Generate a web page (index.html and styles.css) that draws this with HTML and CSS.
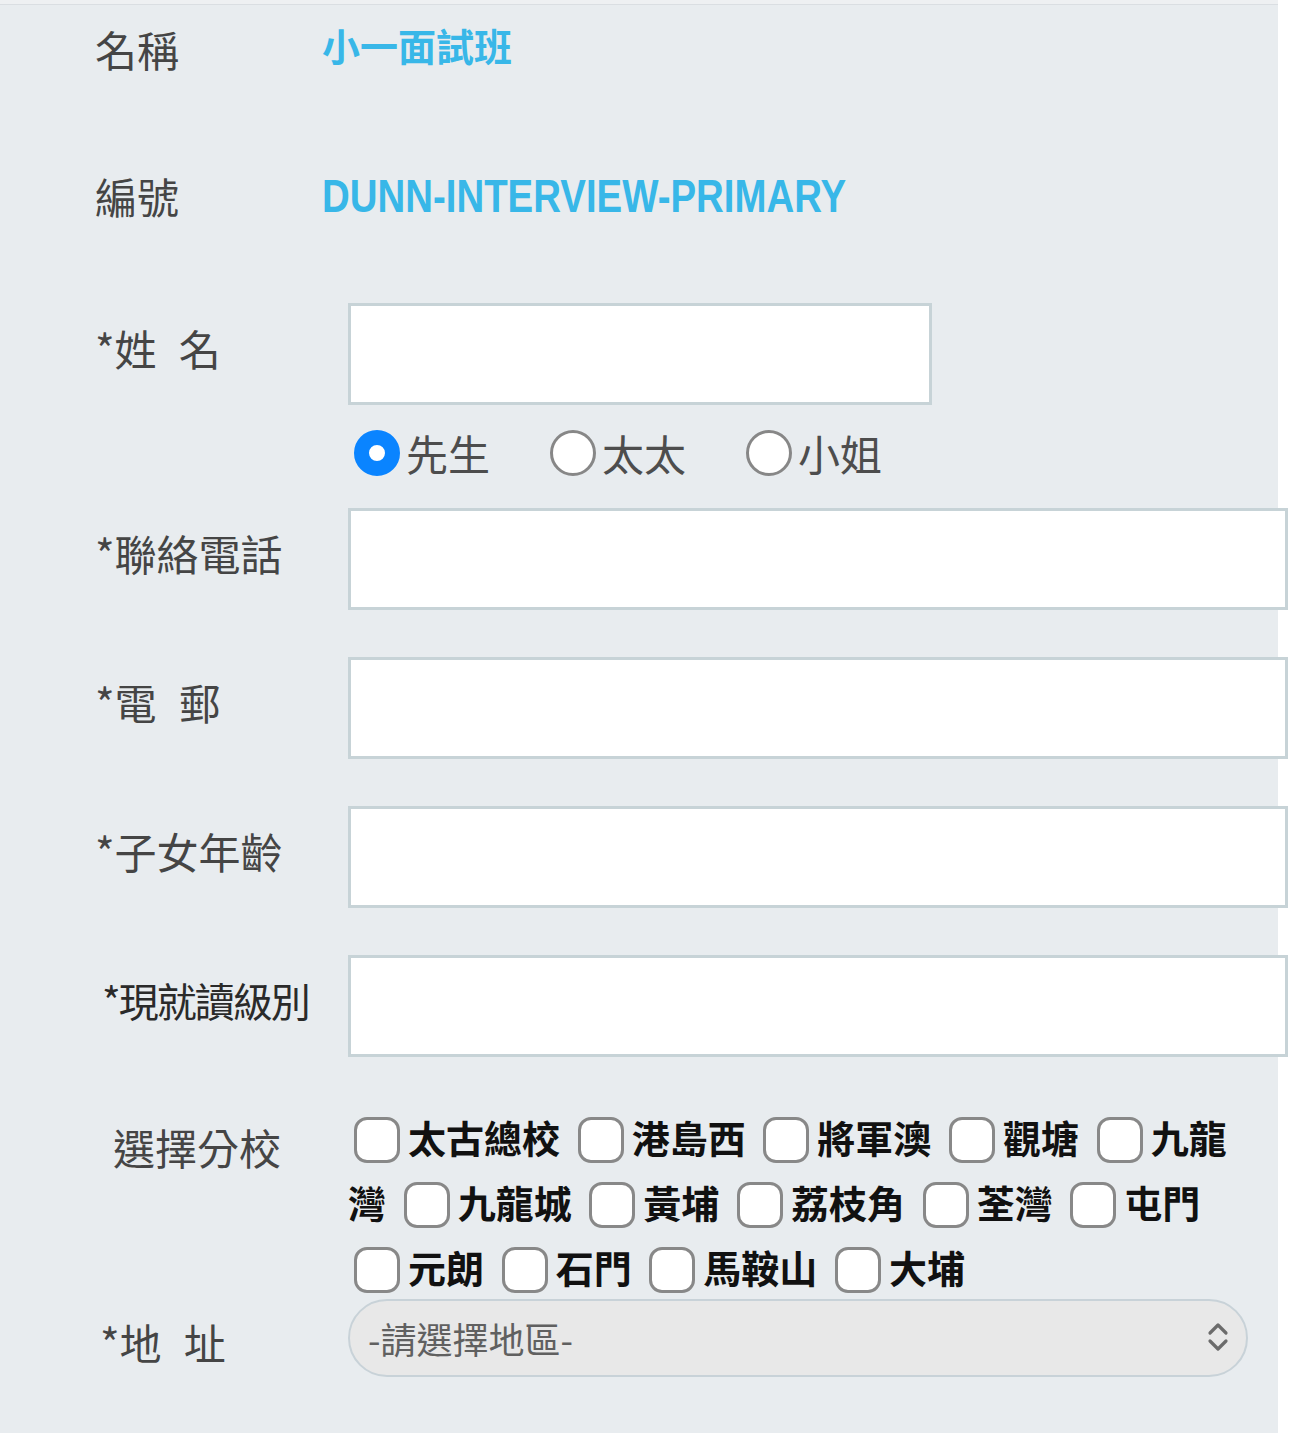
FILE: index.html
```html
<!DOCTYPE html>
<html lang="zh-Hant">
<head>
<meta charset="utf-8">
<title>小一面試班</title>
<link rel="stylesheet" href="styles.css">
</head>
<body>
<div class="page">
  <div class="topline"></div>
  <div class="panel">
    <div class="info r-name">
      <div class="label">名稱</div>
      <div class="value-zh">小一面試班</div>
    </div>
    <div class="info r-code">
      <div class="label">編號</div>
      <div class="value-en"><span class="squeeze">DUNN-INTERVIEW-PRIMARY</span></div>
    </div>

    <div class="field r-first">
      <div class="label">*姓<span class="gap"></span>名</div>
      <div class="ctrl"><input class="text short" type="text"></div>
    </div>
    <div class="radios">
      <label class="radio"><input type="radio" name="title" checked><span>先生</span></label>
      <label class="radio"><input type="radio" name="title"><span>太太</span></label>
      <label class="radio"><input type="radio" name="title"><span>小姐</span></label>
    </div>

    <div class="field">
      <div class="label">*聯絡電話</div>
      <div class="ctrl"><input class="text" type="text"></div>
    </div>
    <div class="field spaced">
      <div class="label">*電<span class="gap"></span>郵</div>
      <div class="ctrl"><input class="text" type="text"></div>
    </div>
    <div class="field spaced">
      <div class="label">*子女年齡</div>
      <div class="ctrl"><input class="text" type="text"></div>
    </div>
    <div class="field spaced">
      <div class="label narrow">*現就讀級別</div>
      <div class="ctrl"><input class="text" type="text"></div>
    </div>

    <div class="branches">
      <div class="label branch-label">選擇分校</div>
      <div class="checks"><label class="check"><input type="checkbox"><span>太古總校</span></label> <label class="check"><input type="checkbox"><span>港島西</span></label> <label class="check"><input type="checkbox"><span>將軍澳</span></label> <label class="check"><input type="checkbox"><span>觀塘</span></label> <label class="check"><input type="checkbox"><span>九龍灣</span></label> <label class="check"><input type="checkbox"><span>九龍城</span></label> <label class="check"><input type="checkbox"><span>黃埔</span></label> <label class="check"><input type="checkbox"><span>荔枝角</span></label> <label class="check"><input type="checkbox"><span>荃灣</span></label> <label class="check"><input type="checkbox"><span>屯門</span></label> <label class="check"><input type="checkbox"><span>元朗</span></label> <label class="check"><input type="checkbox"><span>石門</span></label> <label class="check"><input type="checkbox"><span>馬鞍山</span></label> <label class="check"><input type="checkbox"><span>大埔</span></label></div>
    </div>

    <div class="field address">
      <div class="label addr-label">*地<span class="gap"></span>址</div>
      <div class="select-wrap">
        <select class="select">
          <option>-請選擇地區-</option>
        </select>
        <svg class="chevron" width="22" height="30" viewBox="0 0 22 30" aria-hidden="true">
          <path d="M3 11 L11 3 L19 11" fill="none" stroke="#6b6b6b" stroke-width="3.2" stroke-linecap="round" stroke-linejoin="round"/>
          <path d="M3 19 L11 27 L19 19" fill="none" stroke="#6b6b6b" stroke-width="3.2" stroke-linecap="round" stroke-linejoin="round"/>
        </svg>
      </div>
    </div>
  </div>
</div>
</body>
</html>
```

FILE: styles.css
```css
html, body {
  margin: 0;
  padding: 0;
  background: #ffffff;
}

body {
  font-family: "Noto Sans CJK TC", "Noto Sans", sans-serif;
  color: #4a4a4a;
}

.page {
  width: 1290px;
}

.topline {
  width: 1278px;
  height: 4px;
  background: #eef0f2;
  border-bottom: 1px solid #dadee2;
}

.panel {
  width: 1278px;
  min-height: 1428px;
  background: #e8ecef;
  box-sizing: border-box;
}

.label {
  padding-left: 95px;
  font-size: 42px;
  line-height: 1;
  color: #454545;
  white-space: nowrap;
}

.label.narrow {
  padding-left: 102px;
  font-size: 40px;
  letter-spacing: -2px;
  color: #2a2a2a;
}

.gap {
  display: inline-block;
  width: 22px;
}

/* info rows */
.info {
  display: grid;
  grid-template-columns: 322px 1fr;
  align-items: center;
  height: 88px;
}

.r-code {
  margin-top: 59px;
}

.value-zh {
  font-size: 38px;
  font-weight: 700;
  color: #38b7e8;
  line-height: 1;
  padding-bottom: 8px;
}

.value-en {
  font-family: "Liberation Sans", "Noto Sans", sans-serif;
  font-size: 46px;
  font-weight: 700;
  color: #38b7e8;
  line-height: 1;
  white-space: nowrap;
}

.squeeze {
  display: inline-block;
  transform: scaleX(0.835);
  transform-origin: left center;
}

/* fields */
.field {
  display: grid;
  grid-template-columns: 348px 1fr;
  align-items: center;
}

.field .label {
  padding-bottom: 12px;
}

.r-first {
  margin-top: 63px;
}

.spaced {
  margin-top: 47px;
}

.text {
  display: block;
  box-sizing: border-box;
  width: 940px;
  height: 102px;
  margin: 0;
  padding: 0 16px;
  background: #ffffff;
  border: 3px solid #c7d3d7;
  border-radius: 0;
  outline: none;
  font-size: 34px;
}

.text.short {
  width: 584px;
}

/* radios */
.radios {
  display: flex;
  align-items: center;
  height: 103px;
  padding-left: 348px;
  padding-bottom: 7px;
  box-sizing: border-box;
}

.radio {
  display: inline-flex;
  align-items: center;
  width: 196px;
  font-size: 42px;
  line-height: 1;
  color: #4d4d4d;
}

.radio input {
  appearance: none;
  -webkit-appearance: none;
  box-sizing: border-box;
  width: 46px;
  height: 46px;
  margin: 0 6px 0 6px;
  border-radius: 50%;
  border: 3px solid #878787;
  background: #ffffff;
}

.radio input:checked {
  border: 15px solid #0a84ff;
  background: #ffffff;
}

/* branches */
.branches {
  display: grid;
  grid-template-columns: 348px 900px;
  align-items: start;
  margin-top: 47px;
}

.branch-label {
  padding-left: 113px;
  padding-top: 22px;
}

.checks {
  font-size: 38px;
  line-height: 65px;
  font-weight: 700;
  color: #111111;
}

.check input {
  appearance: none;
  -webkit-appearance: none;
  box-sizing: border-box;
  width: 46px;
  height: 46px;
  margin: 0 8px 0 6px;
  border: 3px solid #888888;
  border-radius: 13px;
  background: #ffffff;
  vertical-align: middle;
  position: relative;
  top: -3px;
}

.check span {
  margin-right: 3px;
}

/* address */
.address .label {
  padding-bottom: 0;
  padding-top: 8px;
  padding-left: 100px;
}

.select-wrap {
  position: relative;
  width: 900px;
}

.select {
  appearance: none;
  -webkit-appearance: none;
  display: block;
  box-sizing: border-box;
  width: 900px;
  height: 78px;
  margin: 0;
  padding: 0 60px 0 18px;
  border: 2px solid #c8d2d8;
  border-radius: 39px;
  background: #e8e8e8;
  font-family: "Noto Sans CJK TC", sans-serif;
  font-size: 36px;
  color: #606060;
  outline: none;
}

.chevron {
  position: absolute;
  right: 19px;
  top: 23px;
  pointer-events: none;
}
```
